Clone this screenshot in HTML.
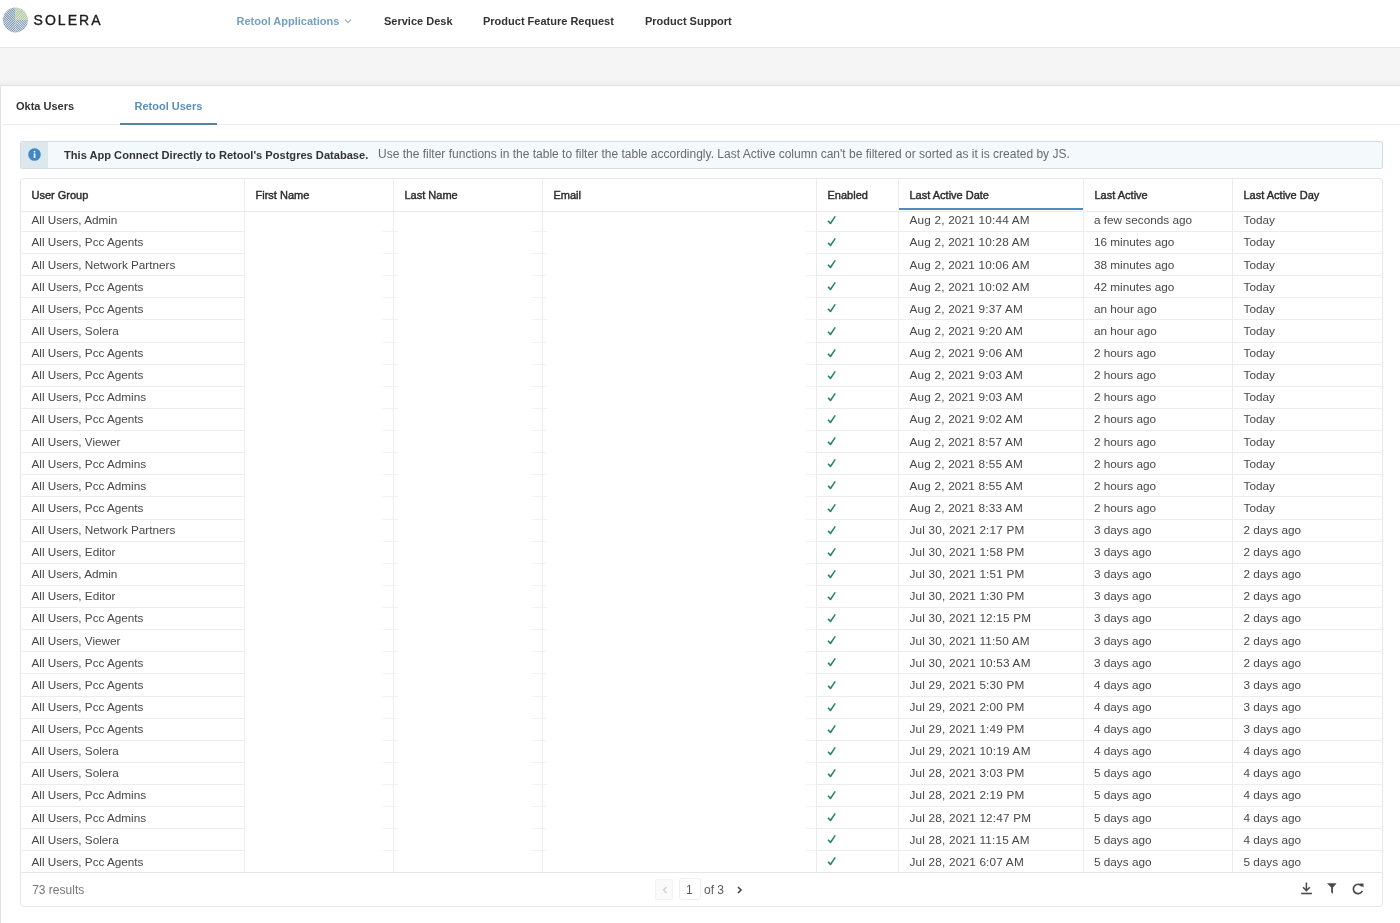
<!DOCTYPE html>
<html><head><meta charset="utf-8">
<style>
html,body{margin:0;padding:0;}
body{will-change:transform;width:1400px;height:923px;overflow:hidden;position:relative;background:#fff;font-family:"Liberation Sans",sans-serif;}
.a{position:absolute;}
.t{position:absolute;white-space:nowrap;}
</style></head><body>

<div class="a" style="left:0;top:0;width:1400px;height:47px;background:#fff;"></div>
<div class="a" style="left:0;top:47px;width:1400px;height:1px;background:#e7e7e7;"></div>
<div class="a" style="left:0;top:48px;width:1400px;height:37px;background:#f5f5f5;"></div>
<div class="a" style="left:0;top:80px;width:1400px;height:5px;background:linear-gradient(#f5f5f5,#eeeeee);"></div>
<svg class="a" style="left:2px;top:7px" width="27" height="27" viewBox="0 0 27 27">
<defs><clipPath id="cc"><circle cx="13.45" cy="13.0" r="12.5"/></clipPath>
<clipPath id="q1"><rect x="0" y="0" width="13.45" height="13"/></clipPath>
<clipPath id="q2"><rect x="0" y="13" width="13.45" height="14"/></clipPath>
<clipPath id="q3"><rect x="13.45" y="0" width="14" height="13"/></clipPath>
<clipPath id="q4"><rect x="13.45" y="13" width="14" height="14"/></clipPath>
</defs>
<g clip-path="url(#cc)" stroke-width="1.05" fill="none">
<g clip-path="url(#q1)" stroke="#7590aa"><path d="M-5 -42.55 L32 -5.55"/><path d="M-5 -40.20 L32 -3.20"/><path d="M-5 -37.85 L32 -0.85"/><path d="M-5 -35.50 L32 1.50"/><path d="M-5 -33.15 L32 3.85"/><path d="M-5 -30.80 L32 6.20"/><path d="M-5 -28.45 L32 8.55"/><path d="M-5 -26.10 L32 10.90"/><path d="M-5 -23.75 L32 13.25"/><path d="M-5 -21.40 L32 15.60"/><path d="M-5 -19.05 L32 17.95"/><path d="M-5 -16.70 L32 20.30"/><path d="M-5 -14.35 L32 22.65"/><path d="M-5 -12.00 L32 25.00"/><path d="M-5 -9.65 L32 27.35"/><path d="M-5 -7.30 L32 29.70"/><path d="M-5 -4.95 L32 32.05"/><path d="M-5 -2.60 L32 34.40"/><path d="M-5 -0.25 L32 36.75"/><path d="M-5 2.10 L32 39.10"/><path d="M-5 4.45 L32 41.45"/><path d="M-5 6.80 L32 43.80"/><path d="M-5 9.15 L32 46.15"/><path d="M-5 11.50 L32 48.50"/><path d="M-5 13.85 L32 50.85"/><path d="M-5 16.20 L32 53.20"/><path d="M-5 18.55 L32 55.55"/><path d="M-5 20.90 L32 57.90"/><path d="M-5 23.25 L32 60.25"/><path d="M-5 25.60 L32 62.60"/><path d="M-5 27.95 L32 64.95"/><path d="M-5 30.30 L32 67.30"/><path d="M-5 32.65 L32 69.65"/></g><g clip-path="url(#q2)" stroke="#7a95ae"><path d="M-5 -5.65 L32 -42.65"/><path d="M-5 -3.30 L32 -40.30"/><path d="M-5 -0.95 L32 -37.95"/><path d="M-5 1.40 L32 -35.60"/><path d="M-5 3.75 L32 -33.25"/><path d="M-5 6.10 L32 -30.90"/><path d="M-5 8.45 L32 -28.55"/><path d="M-5 10.80 L32 -26.20"/><path d="M-5 13.15 L32 -23.85"/><path d="M-5 15.50 L32 -21.50"/><path d="M-5 17.85 L32 -19.15"/><path d="M-5 20.20 L32 -16.80"/><path d="M-5 22.55 L32 -14.45"/><path d="M-5 24.90 L32 -12.10"/><path d="M-5 27.25 L32 -9.75"/><path d="M-5 29.60 L32 -7.40"/><path d="M-5 31.95 L32 -5.05"/><path d="M-5 34.30 L32 -2.70"/><path d="M-5 36.65 L32 -0.35"/><path d="M-5 39.00 L32 2.00"/><path d="M-5 41.35 L32 4.35"/><path d="M-5 43.70 L32 6.70"/><path d="M-5 46.05 L32 9.05"/><path d="M-5 48.40 L32 11.40"/><path d="M-5 50.75 L32 13.75"/><path d="M-5 53.10 L32 16.10"/><path d="M-5 55.45 L32 18.45"/><path d="M-5 57.80 L32 20.80"/><path d="M-5 60.15 L32 23.15"/><path d="M-5 62.50 L32 25.50"/><path d="M-5 64.85 L32 27.85"/><path d="M-5 67.20 L32 30.20"/><path d="M-5 69.55 L32 32.55"/></g><g clip-path="url(#q3)" stroke="#a3bf94"><path d="M-5 -5.65 L32 -42.65"/><path d="M-5 -3.30 L32 -40.30"/><path d="M-5 -0.95 L32 -37.95"/><path d="M-5 1.40 L32 -35.60"/><path d="M-5 3.75 L32 -33.25"/><path d="M-5 6.10 L32 -30.90"/><path d="M-5 8.45 L32 -28.55"/><path d="M-5 10.80 L32 -26.20"/><path d="M-5 13.15 L32 -23.85"/><path d="M-5 15.50 L32 -21.50"/><path d="M-5 17.85 L32 -19.15"/><path d="M-5 20.20 L32 -16.80"/><path d="M-5 22.55 L32 -14.45"/><path d="M-5 24.90 L32 -12.10"/><path d="M-5 27.25 L32 -9.75"/><path d="M-5 29.60 L32 -7.40"/><path d="M-5 31.95 L32 -5.05"/><path d="M-5 34.30 L32 -2.70"/><path d="M-5 36.65 L32 -0.35"/><path d="M-5 39.00 L32 2.00"/><path d="M-5 41.35 L32 4.35"/><path d="M-5 43.70 L32 6.70"/><path d="M-5 46.05 L32 9.05"/><path d="M-5 48.40 L32 11.40"/><path d="M-5 50.75 L32 13.75"/><path d="M-5 53.10 L32 16.10"/><path d="M-5 55.45 L32 18.45"/><path d="M-5 57.80 L32 20.80"/><path d="M-5 60.15 L32 23.15"/><path d="M-5 62.50 L32 25.50"/><path d="M-5 64.85 L32 27.85"/><path d="M-5 67.20 L32 30.20"/><path d="M-5 69.55 L32 32.55"/></g><g clip-path="url(#q4)" stroke="#7f99b2"><path d="M-5 -42.55 L32 -5.55"/><path d="M-5 -40.20 L32 -3.20"/><path d="M-5 -37.85 L32 -0.85"/><path d="M-5 -35.50 L32 1.50"/><path d="M-5 -33.15 L32 3.85"/><path d="M-5 -30.80 L32 6.20"/><path d="M-5 -28.45 L32 8.55"/><path d="M-5 -26.10 L32 10.90"/><path d="M-5 -23.75 L32 13.25"/><path d="M-5 -21.40 L32 15.60"/><path d="M-5 -19.05 L32 17.95"/><path d="M-5 -16.70 L32 20.30"/><path d="M-5 -14.35 L32 22.65"/><path d="M-5 -12.00 L32 25.00"/><path d="M-5 -9.65 L32 27.35"/><path d="M-5 -7.30 L32 29.70"/><path d="M-5 -4.95 L32 32.05"/><path d="M-5 -2.60 L32 34.40"/><path d="M-5 -0.25 L32 36.75"/><path d="M-5 2.10 L32 39.10"/><path d="M-5 4.45 L32 41.45"/><path d="M-5 6.80 L32 43.80"/><path d="M-5 9.15 L32 46.15"/><path d="M-5 11.50 L32 48.50"/><path d="M-5 13.85 L32 50.85"/><path d="M-5 16.20 L32 53.20"/><path d="M-5 18.55 L32 55.55"/><path d="M-5 20.90 L32 57.90"/><path d="M-5 23.25 L32 60.25"/><path d="M-5 25.60 L32 62.60"/><path d="M-5 27.95 L32 64.95"/><path d="M-5 30.30 L32 67.30"/><path d="M-5 32.65 L32 69.65"/></g></g></svg>
<div class="t" style="left:33.5px;top:12px;font-size:14px;line-height:16px;letter-spacing:2.05px;color:#1e1e1e;-webkit-text-stroke:0.35px #1e1e1e;">SOLERA</div>
<div class="t" style="left:236.5px;top:13.99px;font-size:11px;line-height:15px;color:#76a0bf;font-weight:bold;">Retool Applications</div>
<svg class="a" style="left:344px;top:18px" width="8" height="6" viewBox="0 0 8 6"><path d="M1 1.5 L4 4.5 L7 1.5" fill="none" stroke="#a6b8c6" stroke-width="1.3"/></svg>
<div class="t" style="left:384px;top:13.99px;font-size:11px;line-height:15px;color:#333;font-weight:bold;">Service Desk</div>
<div class="t" style="left:483px;top:13.99px;font-size:11px;line-height:15px;color:#333;font-weight:bold;">Product Feature Request</div>
<div class="t" style="left:645px;top:13.99px;font-size:11px;line-height:15px;color:#333;font-weight:bold;">Product Support</div>
<div class="a" style="left:0;top:85px;width:1400px;height:838px;background:#fff;border-top:1px solid #e2e2e2;border-left:1px solid #e2e2e2;box-sizing:border-box;"></div>
<div class="t" style="left:16px;top:99.39px;font-size:11px;line-height:15px;color:#333;font-weight:bold;">Okta Users</div>
<div class="t" style="left:134.5px;top:99.39px;font-size:11px;line-height:15px;color:#5b8fb8;font-weight:bold;">Retool Users</div>
<div class="a" style="left:2px;top:124px;width:1398px;height:1px;background:#ececec;"></div>
<div class="a" style="left:120px;top:123px;width:96.5px;height:2px;background:#55849f;"></div>
<div class="a" style="left:20px;top:141px;width:1363px;height:28px;background:#f4f9fb;border:1px solid #d3dee4;box-sizing:border-box;border-radius:2px;"></div>
<div class="a" style="left:21px;top:142px;width:27px;height:26px;background:#dde7ee;border-radius:2px 0 0 2px;"></div>
<svg class="a" style="left:28px;top:147.8px" width="13" height="13" viewBox="0 0 13 13"><circle cx="6.5" cy="6.5" r="6.3" fill="#3f87c5"/><rect x="5.7" y="5.4" width="1.7" height="4.6" fill="#fff"/><circle cx="6.55" cy="3.6" r="0.95" fill="#fff"/></svg>
<div class="t" style="left:64px;top:147.05px;font-size:11.1px;line-height:16px;color:#333;font-weight:bold;">This App Connect Directly to Retool's Postgres Database.</div>
<div class="t" style="left:378px;top:146.24px;font-size:12px;line-height:17px;color:#6b6b6b;font-weight:normal;">Use the filter functions in the table to filter the table accordingly. Last Active column can't be filtered or sorted as it is created by JS.</div>
<div class="a" style="left:20px;top:178px;width:1363px;height:729px;border:1px solid #e6e6e6;border-radius:4px;box-sizing:border-box;background:#fff;"></div>
<div class="a" style="left:21px;top:211px;width:1361px;height:1px;background:#eaeaea;"></div>
<div class="a" style="left:244px;top:179px;width:1px;height:693px;background:#ececec;"></div>
<div class="a" style="left:393px;top:179px;width:1px;height:693px;background:#ececec;"></div>
<div class="a" style="left:542px;top:179px;width:1px;height:693px;background:#ececec;"></div>
<div class="a" style="left:816px;top:179px;width:1px;height:693px;background:#ececec;"></div>
<div class="a" style="left:898px;top:179px;width:1px;height:693px;background:#ececec;"></div>
<div class="a" style="left:1083px;top:179px;width:1px;height:693px;background:#ececec;"></div>
<div class="a" style="left:1232px;top:179px;width:1px;height:693px;background:#ececec;"></div>
<div class="a" style="left:899px;top:208px;width:184px;height:2px;background:#4f8bbf;"></div>
<div class="t" style="left:31.5px;top:188.09px;font-size:11px;line-height:15px;color:#2b2b2b;font-weight:normal;-webkit-text-stroke:0.4px #2b2b2b;">User Group</div>
<div class="t" style="left:255.5px;top:188.09px;font-size:11px;line-height:15px;color:#2b2b2b;font-weight:normal;-webkit-text-stroke:0.4px #2b2b2b;">First Name</div>
<div class="t" style="left:404.5px;top:188.09px;font-size:11px;line-height:15px;color:#2b2b2b;font-weight:normal;-webkit-text-stroke:0.4px #2b2b2b;">Last Name</div>
<div class="t" style="left:553.5px;top:188.09px;font-size:11px;line-height:15px;color:#2b2b2b;font-weight:normal;-webkit-text-stroke:0.4px #2b2b2b;">Email</div>
<div class="t" style="left:827.5px;top:188.09px;font-size:11px;line-height:15px;color:#2b2b2b;font-weight:normal;-webkit-text-stroke:0.4px #2b2b2b;">Enabled</div>
<div class="t" style="left:909.5px;top:188.09px;font-size:11px;line-height:15px;color:#2b2b2b;font-weight:normal;-webkit-text-stroke:0.4px #2b2b2b;">Last Active Date</div>
<div class="t" style="left:1094.5px;top:188.09px;font-size:11px;line-height:15px;color:#2b2b2b;font-weight:normal;-webkit-text-stroke:0.4px #2b2b2b;">Last Active</div>
<div class="t" style="left:1243.5px;top:188.09px;font-size:11px;line-height:15px;color:#2b2b2b;font-weight:normal;-webkit-text-stroke:0.4px #2b2b2b;">Last Active Day</div>
<div class="a" style="left:21px;top:231.00px;width:223px;height:1px;background:#ededed;"></div>
<div class="a" style="left:817px;top:231.00px;width:81px;height:1px;background:#ededed;"></div>
<div class="a" style="left:899px;top:231.00px;width:184px;height:1px;background:#ededed;"></div>
<div class="a" style="left:1084px;top:231.00px;width:148px;height:1px;background:#ededed;"></div>
<div class="a" style="left:1233px;top:231.00px;width:150px;height:1px;background:#ededed;"></div>
<div class="a" style="left:383px;top:231.00px;width:15px;height:1px;background:#f1f1f1;"></div>
<div class="a" style="left:532px;top:231.00px;width:15px;height:1px;background:#f1f1f1;"></div>
<div class="a" style="left:806px;top:231.00px;width:10px;height:1px;background:#f3f3f3;"></div>
<div class="t" style="left:31.5px;top:212.33px;font-size:11.75px;line-height:16px;color:#474747;font-weight:normal;letter-spacing:-0.02px;">All Users, Admin</div>
<div class="a" style="left:826.5px;top:216.00px;width:10px;height:10px;"><svg style="display:block" width="10" height="10" viewBox="0 0 10 10"><path d="M0.45 5.25 L1.55 4.25 L3.45 6.05 L7.7 -0.1 L8.85 0.65 L4.15 8.1 L3.05 8.2 Z" fill="#2a8664"/></svg></div>
<div class="t" style="left:909.5px;top:212.33px;font-size:11.75px;line-height:16px;color:#474747;font-weight:normal;letter-spacing:0.2px;">Aug 2, 2021 10:44 AM</div>
<div class="t" style="left:1094px;top:212.33px;font-size:11.75px;line-height:16px;color:#474747;font-weight:normal;">a few seconds ago</div>
<div class="t" style="left:1243.5px;top:212.33px;font-size:11.75px;line-height:16px;color:#474747;font-weight:normal;">Today</div>
<div class="a" style="left:21px;top:253.12px;width:223px;height:1px;background:#ededed;"></div>
<div class="a" style="left:817px;top:253.12px;width:81px;height:1px;background:#ededed;"></div>
<div class="a" style="left:899px;top:253.12px;width:184px;height:1px;background:#ededed;"></div>
<div class="a" style="left:1084px;top:253.12px;width:148px;height:1px;background:#ededed;"></div>
<div class="a" style="left:1233px;top:253.12px;width:150px;height:1px;background:#ededed;"></div>
<div class="a" style="left:383px;top:253.12px;width:15px;height:1px;background:#f1f1f1;"></div>
<div class="a" style="left:532px;top:253.12px;width:15px;height:1px;background:#f1f1f1;"></div>
<div class="a" style="left:806px;top:253.12px;width:10px;height:1px;background:#f3f3f3;"></div>
<div class="t" style="left:31.5px;top:234.45px;font-size:11.75px;line-height:16px;color:#474747;font-weight:normal;letter-spacing:-0.02px;">All Users, Pcc Agents</div>
<div class="a" style="left:826.5px;top:238.12px;width:10px;height:10px;"><svg style="display:block" width="10" height="10" viewBox="0 0 10 10"><path d="M0.45 5.25 L1.55 4.25 L3.45 6.05 L7.7 -0.1 L8.85 0.65 L4.15 8.1 L3.05 8.2 Z" fill="#2a8664"/></svg></div>
<div class="t" style="left:909.5px;top:234.45px;font-size:11.75px;line-height:16px;color:#474747;font-weight:normal;letter-spacing:0.2px;">Aug 2, 2021 10:28 AM</div>
<div class="t" style="left:1094px;top:234.45px;font-size:11.75px;line-height:16px;color:#474747;font-weight:normal;">16 minutes ago</div>
<div class="t" style="left:1243.5px;top:234.45px;font-size:11.75px;line-height:16px;color:#474747;font-weight:normal;">Today</div>
<div class="a" style="left:21px;top:275.24px;width:223px;height:1px;background:#ededed;"></div>
<div class="a" style="left:817px;top:275.24px;width:81px;height:1px;background:#ededed;"></div>
<div class="a" style="left:899px;top:275.24px;width:184px;height:1px;background:#ededed;"></div>
<div class="a" style="left:1084px;top:275.24px;width:148px;height:1px;background:#ededed;"></div>
<div class="a" style="left:1233px;top:275.24px;width:150px;height:1px;background:#ededed;"></div>
<div class="a" style="left:383px;top:275.24px;width:15px;height:1px;background:#f1f1f1;"></div>
<div class="a" style="left:532px;top:275.24px;width:15px;height:1px;background:#f1f1f1;"></div>
<div class="a" style="left:806px;top:275.24px;width:10px;height:1px;background:#f3f3f3;"></div>
<div class="t" style="left:31.5px;top:256.57px;font-size:11.75px;line-height:16px;color:#474747;font-weight:normal;letter-spacing:-0.02px;">All Users, Network Partners</div>
<div class="a" style="left:826.5px;top:260.24px;width:10px;height:10px;"><svg style="display:block" width="10" height="10" viewBox="0 0 10 10"><path d="M0.45 5.25 L1.55 4.25 L3.45 6.05 L7.7 -0.1 L8.85 0.65 L4.15 8.1 L3.05 8.2 Z" fill="#2a8664"/></svg></div>
<div class="t" style="left:909.5px;top:256.57px;font-size:11.75px;line-height:16px;color:#474747;font-weight:normal;letter-spacing:0.2px;">Aug 2, 2021 10:06 AM</div>
<div class="t" style="left:1094px;top:256.57px;font-size:11.75px;line-height:16px;color:#474747;font-weight:normal;">38 minutes ago</div>
<div class="t" style="left:1243.5px;top:256.57px;font-size:11.75px;line-height:16px;color:#474747;font-weight:normal;">Today</div>
<div class="a" style="left:21px;top:297.36px;width:223px;height:1px;background:#ededed;"></div>
<div class="a" style="left:817px;top:297.36px;width:81px;height:1px;background:#ededed;"></div>
<div class="a" style="left:899px;top:297.36px;width:184px;height:1px;background:#ededed;"></div>
<div class="a" style="left:1084px;top:297.36px;width:148px;height:1px;background:#ededed;"></div>
<div class="a" style="left:1233px;top:297.36px;width:150px;height:1px;background:#ededed;"></div>
<div class="a" style="left:383px;top:297.36px;width:15px;height:1px;background:#f1f1f1;"></div>
<div class="a" style="left:532px;top:297.36px;width:15px;height:1px;background:#f1f1f1;"></div>
<div class="a" style="left:806px;top:297.36px;width:10px;height:1px;background:#f3f3f3;"></div>
<div class="t" style="left:31.5px;top:278.69px;font-size:11.75px;line-height:16px;color:#474747;font-weight:normal;letter-spacing:-0.02px;">All Users, Pcc Agents</div>
<div class="a" style="left:826.5px;top:282.36px;width:10px;height:10px;"><svg style="display:block" width="10" height="10" viewBox="0 0 10 10"><path d="M0.45 5.25 L1.55 4.25 L3.45 6.05 L7.7 -0.1 L8.85 0.65 L4.15 8.1 L3.05 8.2 Z" fill="#2a8664"/></svg></div>
<div class="t" style="left:909.5px;top:278.69px;font-size:11.75px;line-height:16px;color:#474747;font-weight:normal;letter-spacing:0.2px;">Aug 2, 2021 10:02 AM</div>
<div class="t" style="left:1094px;top:278.69px;font-size:11.75px;line-height:16px;color:#474747;font-weight:normal;">42 minutes ago</div>
<div class="t" style="left:1243.5px;top:278.69px;font-size:11.75px;line-height:16px;color:#474747;font-weight:normal;">Today</div>
<div class="a" style="left:21px;top:319.48px;width:223px;height:1px;background:#ededed;"></div>
<div class="a" style="left:817px;top:319.48px;width:81px;height:1px;background:#ededed;"></div>
<div class="a" style="left:899px;top:319.48px;width:184px;height:1px;background:#ededed;"></div>
<div class="a" style="left:1084px;top:319.48px;width:148px;height:1px;background:#ededed;"></div>
<div class="a" style="left:1233px;top:319.48px;width:150px;height:1px;background:#ededed;"></div>
<div class="a" style="left:383px;top:319.48px;width:15px;height:1px;background:#f1f1f1;"></div>
<div class="a" style="left:532px;top:319.48px;width:15px;height:1px;background:#f1f1f1;"></div>
<div class="a" style="left:806px;top:319.48px;width:10px;height:1px;background:#f3f3f3;"></div>
<div class="t" style="left:31.5px;top:300.81px;font-size:11.75px;line-height:16px;color:#474747;font-weight:normal;letter-spacing:-0.02px;">All Users, Pcc Agents</div>
<div class="a" style="left:826.5px;top:304.48px;width:10px;height:10px;"><svg style="display:block" width="10" height="10" viewBox="0 0 10 10"><path d="M0.45 5.25 L1.55 4.25 L3.45 6.05 L7.7 -0.1 L8.85 0.65 L4.15 8.1 L3.05 8.2 Z" fill="#2a8664"/></svg></div>
<div class="t" style="left:909.5px;top:300.81px;font-size:11.75px;line-height:16px;color:#474747;font-weight:normal;letter-spacing:0.2px;">Aug 2, 2021 9:37 AM</div>
<div class="t" style="left:1094px;top:300.81px;font-size:11.75px;line-height:16px;color:#474747;font-weight:normal;">an hour ago</div>
<div class="t" style="left:1243.5px;top:300.81px;font-size:11.75px;line-height:16px;color:#474747;font-weight:normal;">Today</div>
<div class="a" style="left:21px;top:341.60px;width:223px;height:1px;background:#ededed;"></div>
<div class="a" style="left:817px;top:341.60px;width:81px;height:1px;background:#ededed;"></div>
<div class="a" style="left:899px;top:341.60px;width:184px;height:1px;background:#ededed;"></div>
<div class="a" style="left:1084px;top:341.60px;width:148px;height:1px;background:#ededed;"></div>
<div class="a" style="left:1233px;top:341.60px;width:150px;height:1px;background:#ededed;"></div>
<div class="a" style="left:383px;top:341.60px;width:15px;height:1px;background:#f1f1f1;"></div>
<div class="a" style="left:532px;top:341.60px;width:15px;height:1px;background:#f1f1f1;"></div>
<div class="a" style="left:806px;top:341.60px;width:10px;height:1px;background:#f3f3f3;"></div>
<div class="t" style="left:31.5px;top:322.93px;font-size:11.75px;line-height:16px;color:#474747;font-weight:normal;letter-spacing:-0.02px;">All Users, Solera</div>
<div class="a" style="left:826.5px;top:326.60px;width:10px;height:10px;"><svg style="display:block" width="10" height="10" viewBox="0 0 10 10"><path d="M0.45 5.25 L1.55 4.25 L3.45 6.05 L7.7 -0.1 L8.85 0.65 L4.15 8.1 L3.05 8.2 Z" fill="#2a8664"/></svg></div>
<div class="t" style="left:909.5px;top:322.93px;font-size:11.75px;line-height:16px;color:#474747;font-weight:normal;letter-spacing:0.2px;">Aug 2, 2021 9:20 AM</div>
<div class="t" style="left:1094px;top:322.93px;font-size:11.75px;line-height:16px;color:#474747;font-weight:normal;">an hour ago</div>
<div class="t" style="left:1243.5px;top:322.93px;font-size:11.75px;line-height:16px;color:#474747;font-weight:normal;">Today</div>
<div class="a" style="left:21px;top:363.72px;width:223px;height:1px;background:#ededed;"></div>
<div class="a" style="left:817px;top:363.72px;width:81px;height:1px;background:#ededed;"></div>
<div class="a" style="left:899px;top:363.72px;width:184px;height:1px;background:#ededed;"></div>
<div class="a" style="left:1084px;top:363.72px;width:148px;height:1px;background:#ededed;"></div>
<div class="a" style="left:1233px;top:363.72px;width:150px;height:1px;background:#ededed;"></div>
<div class="a" style="left:383px;top:363.72px;width:15px;height:1px;background:#f1f1f1;"></div>
<div class="a" style="left:532px;top:363.72px;width:15px;height:1px;background:#f1f1f1;"></div>
<div class="a" style="left:806px;top:363.72px;width:10px;height:1px;background:#f3f3f3;"></div>
<div class="t" style="left:31.5px;top:345.05px;font-size:11.75px;line-height:16px;color:#474747;font-weight:normal;letter-spacing:-0.02px;">All Users, Pcc Agents</div>
<div class="a" style="left:826.5px;top:348.72px;width:10px;height:10px;"><svg style="display:block" width="10" height="10" viewBox="0 0 10 10"><path d="M0.45 5.25 L1.55 4.25 L3.45 6.05 L7.7 -0.1 L8.85 0.65 L4.15 8.1 L3.05 8.2 Z" fill="#2a8664"/></svg></div>
<div class="t" style="left:909.5px;top:345.05px;font-size:11.75px;line-height:16px;color:#474747;font-weight:normal;letter-spacing:0.2px;">Aug 2, 2021 9:06 AM</div>
<div class="t" style="left:1094px;top:345.05px;font-size:11.75px;line-height:16px;color:#474747;font-weight:normal;">2 hours ago</div>
<div class="t" style="left:1243.5px;top:345.05px;font-size:11.75px;line-height:16px;color:#474747;font-weight:normal;">Today</div>
<div class="a" style="left:21px;top:385.84px;width:223px;height:1px;background:#ededed;"></div>
<div class="a" style="left:817px;top:385.84px;width:81px;height:1px;background:#ededed;"></div>
<div class="a" style="left:899px;top:385.84px;width:184px;height:1px;background:#ededed;"></div>
<div class="a" style="left:1084px;top:385.84px;width:148px;height:1px;background:#ededed;"></div>
<div class="a" style="left:1233px;top:385.84px;width:150px;height:1px;background:#ededed;"></div>
<div class="a" style="left:383px;top:385.84px;width:15px;height:1px;background:#f1f1f1;"></div>
<div class="a" style="left:532px;top:385.84px;width:15px;height:1px;background:#f1f1f1;"></div>
<div class="a" style="left:806px;top:385.84px;width:10px;height:1px;background:#f3f3f3;"></div>
<div class="t" style="left:31.5px;top:367.17px;font-size:11.75px;line-height:16px;color:#474747;font-weight:normal;letter-spacing:-0.02px;">All Users, Pcc Agents</div>
<div class="a" style="left:826.5px;top:370.84px;width:10px;height:10px;"><svg style="display:block" width="10" height="10" viewBox="0 0 10 10"><path d="M0.45 5.25 L1.55 4.25 L3.45 6.05 L7.7 -0.1 L8.85 0.65 L4.15 8.1 L3.05 8.2 Z" fill="#2a8664"/></svg></div>
<div class="t" style="left:909.5px;top:367.17px;font-size:11.75px;line-height:16px;color:#474747;font-weight:normal;letter-spacing:0.2px;">Aug 2, 2021 9:03 AM</div>
<div class="t" style="left:1094px;top:367.17px;font-size:11.75px;line-height:16px;color:#474747;font-weight:normal;">2 hours ago</div>
<div class="t" style="left:1243.5px;top:367.17px;font-size:11.75px;line-height:16px;color:#474747;font-weight:normal;">Today</div>
<div class="a" style="left:21px;top:407.96px;width:223px;height:1px;background:#ededed;"></div>
<div class="a" style="left:817px;top:407.96px;width:81px;height:1px;background:#ededed;"></div>
<div class="a" style="left:899px;top:407.96px;width:184px;height:1px;background:#ededed;"></div>
<div class="a" style="left:1084px;top:407.96px;width:148px;height:1px;background:#ededed;"></div>
<div class="a" style="left:1233px;top:407.96px;width:150px;height:1px;background:#ededed;"></div>
<div class="a" style="left:383px;top:407.96px;width:15px;height:1px;background:#f1f1f1;"></div>
<div class="a" style="left:532px;top:407.96px;width:15px;height:1px;background:#f1f1f1;"></div>
<div class="a" style="left:806px;top:407.96px;width:10px;height:1px;background:#f3f3f3;"></div>
<div class="t" style="left:31.5px;top:389.29px;font-size:11.75px;line-height:16px;color:#474747;font-weight:normal;letter-spacing:-0.02px;">All Users, Pcc Admins</div>
<div class="a" style="left:826.5px;top:392.96px;width:10px;height:10px;"><svg style="display:block" width="10" height="10" viewBox="0 0 10 10"><path d="M0.45 5.25 L1.55 4.25 L3.45 6.05 L7.7 -0.1 L8.85 0.65 L4.15 8.1 L3.05 8.2 Z" fill="#2a8664"/></svg></div>
<div class="t" style="left:909.5px;top:389.29px;font-size:11.75px;line-height:16px;color:#474747;font-weight:normal;letter-spacing:0.2px;">Aug 2, 2021 9:03 AM</div>
<div class="t" style="left:1094px;top:389.29px;font-size:11.75px;line-height:16px;color:#474747;font-weight:normal;">2 hours ago</div>
<div class="t" style="left:1243.5px;top:389.29px;font-size:11.75px;line-height:16px;color:#474747;font-weight:normal;">Today</div>
<div class="a" style="left:21px;top:430.08px;width:223px;height:1px;background:#ededed;"></div>
<div class="a" style="left:817px;top:430.08px;width:81px;height:1px;background:#ededed;"></div>
<div class="a" style="left:899px;top:430.08px;width:184px;height:1px;background:#ededed;"></div>
<div class="a" style="left:1084px;top:430.08px;width:148px;height:1px;background:#ededed;"></div>
<div class="a" style="left:1233px;top:430.08px;width:150px;height:1px;background:#ededed;"></div>
<div class="a" style="left:383px;top:430.08px;width:15px;height:1px;background:#f1f1f1;"></div>
<div class="a" style="left:532px;top:430.08px;width:15px;height:1px;background:#f1f1f1;"></div>
<div class="a" style="left:806px;top:430.08px;width:10px;height:1px;background:#f3f3f3;"></div>
<div class="t" style="left:31.5px;top:411.41px;font-size:11.75px;line-height:16px;color:#474747;font-weight:normal;letter-spacing:-0.02px;">All Users, Pcc Agents</div>
<div class="a" style="left:826.5px;top:415.08px;width:10px;height:10px;"><svg style="display:block" width="10" height="10" viewBox="0 0 10 10"><path d="M0.45 5.25 L1.55 4.25 L3.45 6.05 L7.7 -0.1 L8.85 0.65 L4.15 8.1 L3.05 8.2 Z" fill="#2a8664"/></svg></div>
<div class="t" style="left:909.5px;top:411.41px;font-size:11.75px;line-height:16px;color:#474747;font-weight:normal;letter-spacing:0.2px;">Aug 2, 2021 9:02 AM</div>
<div class="t" style="left:1094px;top:411.41px;font-size:11.75px;line-height:16px;color:#474747;font-weight:normal;">2 hours ago</div>
<div class="t" style="left:1243.5px;top:411.41px;font-size:11.75px;line-height:16px;color:#474747;font-weight:normal;">Today</div>
<div class="a" style="left:21px;top:452.20px;width:223px;height:1px;background:#ededed;"></div>
<div class="a" style="left:817px;top:452.20px;width:81px;height:1px;background:#ededed;"></div>
<div class="a" style="left:899px;top:452.20px;width:184px;height:1px;background:#ededed;"></div>
<div class="a" style="left:1084px;top:452.20px;width:148px;height:1px;background:#ededed;"></div>
<div class="a" style="left:1233px;top:452.20px;width:150px;height:1px;background:#ededed;"></div>
<div class="a" style="left:383px;top:452.20px;width:15px;height:1px;background:#f1f1f1;"></div>
<div class="a" style="left:532px;top:452.20px;width:15px;height:1px;background:#f1f1f1;"></div>
<div class="a" style="left:806px;top:452.20px;width:10px;height:1px;background:#f3f3f3;"></div>
<div class="t" style="left:31.5px;top:433.53px;font-size:11.75px;line-height:16px;color:#474747;font-weight:normal;letter-spacing:-0.02px;">All Users, Viewer</div>
<div class="a" style="left:826.5px;top:437.20px;width:10px;height:10px;"><svg style="display:block" width="10" height="10" viewBox="0 0 10 10"><path d="M0.45 5.25 L1.55 4.25 L3.45 6.05 L7.7 -0.1 L8.85 0.65 L4.15 8.1 L3.05 8.2 Z" fill="#2a8664"/></svg></div>
<div class="t" style="left:909.5px;top:433.53px;font-size:11.75px;line-height:16px;color:#474747;font-weight:normal;letter-spacing:0.2px;">Aug 2, 2021 8:57 AM</div>
<div class="t" style="left:1094px;top:433.53px;font-size:11.75px;line-height:16px;color:#474747;font-weight:normal;">2 hours ago</div>
<div class="t" style="left:1243.5px;top:433.53px;font-size:11.75px;line-height:16px;color:#474747;font-weight:normal;">Today</div>
<div class="a" style="left:21px;top:474.32px;width:223px;height:1px;background:#ededed;"></div>
<div class="a" style="left:817px;top:474.32px;width:81px;height:1px;background:#ededed;"></div>
<div class="a" style="left:899px;top:474.32px;width:184px;height:1px;background:#ededed;"></div>
<div class="a" style="left:1084px;top:474.32px;width:148px;height:1px;background:#ededed;"></div>
<div class="a" style="left:1233px;top:474.32px;width:150px;height:1px;background:#ededed;"></div>
<div class="a" style="left:383px;top:474.32px;width:15px;height:1px;background:#f1f1f1;"></div>
<div class="a" style="left:532px;top:474.32px;width:15px;height:1px;background:#f1f1f1;"></div>
<div class="a" style="left:806px;top:474.32px;width:10px;height:1px;background:#f3f3f3;"></div>
<div class="t" style="left:31.5px;top:455.65px;font-size:11.75px;line-height:16px;color:#474747;font-weight:normal;letter-spacing:-0.02px;">All Users, Pcc Admins</div>
<div class="a" style="left:826.5px;top:459.32px;width:10px;height:10px;"><svg style="display:block" width="10" height="10" viewBox="0 0 10 10"><path d="M0.45 5.25 L1.55 4.25 L3.45 6.05 L7.7 -0.1 L8.85 0.65 L4.15 8.1 L3.05 8.2 Z" fill="#2a8664"/></svg></div>
<div class="t" style="left:909.5px;top:455.65px;font-size:11.75px;line-height:16px;color:#474747;font-weight:normal;letter-spacing:0.2px;">Aug 2, 2021 8:55 AM</div>
<div class="t" style="left:1094px;top:455.65px;font-size:11.75px;line-height:16px;color:#474747;font-weight:normal;">2 hours ago</div>
<div class="t" style="left:1243.5px;top:455.65px;font-size:11.75px;line-height:16px;color:#474747;font-weight:normal;">Today</div>
<div class="a" style="left:21px;top:496.44px;width:223px;height:1px;background:#ededed;"></div>
<div class="a" style="left:817px;top:496.44px;width:81px;height:1px;background:#ededed;"></div>
<div class="a" style="left:899px;top:496.44px;width:184px;height:1px;background:#ededed;"></div>
<div class="a" style="left:1084px;top:496.44px;width:148px;height:1px;background:#ededed;"></div>
<div class="a" style="left:1233px;top:496.44px;width:150px;height:1px;background:#ededed;"></div>
<div class="a" style="left:383px;top:496.44px;width:15px;height:1px;background:#f1f1f1;"></div>
<div class="a" style="left:532px;top:496.44px;width:15px;height:1px;background:#f1f1f1;"></div>
<div class="a" style="left:806px;top:496.44px;width:10px;height:1px;background:#f3f3f3;"></div>
<div class="t" style="left:31.5px;top:477.77px;font-size:11.75px;line-height:16px;color:#474747;font-weight:normal;letter-spacing:-0.02px;">All Users, Pcc Admins</div>
<div class="a" style="left:826.5px;top:481.44px;width:10px;height:10px;"><svg style="display:block" width="10" height="10" viewBox="0 0 10 10"><path d="M0.45 5.25 L1.55 4.25 L3.45 6.05 L7.7 -0.1 L8.85 0.65 L4.15 8.1 L3.05 8.2 Z" fill="#2a8664"/></svg></div>
<div class="t" style="left:909.5px;top:477.77px;font-size:11.75px;line-height:16px;color:#474747;font-weight:normal;letter-spacing:0.2px;">Aug 2, 2021 8:55 AM</div>
<div class="t" style="left:1094px;top:477.77px;font-size:11.75px;line-height:16px;color:#474747;font-weight:normal;">2 hours ago</div>
<div class="t" style="left:1243.5px;top:477.77px;font-size:11.75px;line-height:16px;color:#474747;font-weight:normal;">Today</div>
<div class="a" style="left:21px;top:518.56px;width:223px;height:1px;background:#ededed;"></div>
<div class="a" style="left:817px;top:518.56px;width:81px;height:1px;background:#ededed;"></div>
<div class="a" style="left:899px;top:518.56px;width:184px;height:1px;background:#ededed;"></div>
<div class="a" style="left:1084px;top:518.56px;width:148px;height:1px;background:#ededed;"></div>
<div class="a" style="left:1233px;top:518.56px;width:150px;height:1px;background:#ededed;"></div>
<div class="a" style="left:383px;top:518.56px;width:15px;height:1px;background:#f1f1f1;"></div>
<div class="a" style="left:532px;top:518.56px;width:15px;height:1px;background:#f1f1f1;"></div>
<div class="a" style="left:806px;top:518.56px;width:10px;height:1px;background:#f3f3f3;"></div>
<div class="t" style="left:31.5px;top:499.89px;font-size:11.75px;line-height:16px;color:#474747;font-weight:normal;letter-spacing:-0.02px;">All Users, Pcc Agents</div>
<div class="a" style="left:826.5px;top:503.56px;width:10px;height:10px;"><svg style="display:block" width="10" height="10" viewBox="0 0 10 10"><path d="M0.45 5.25 L1.55 4.25 L3.45 6.05 L7.7 -0.1 L8.85 0.65 L4.15 8.1 L3.05 8.2 Z" fill="#2a8664"/></svg></div>
<div class="t" style="left:909.5px;top:499.89px;font-size:11.75px;line-height:16px;color:#474747;font-weight:normal;letter-spacing:0.2px;">Aug 2, 2021 8:33 AM</div>
<div class="t" style="left:1094px;top:499.89px;font-size:11.75px;line-height:16px;color:#474747;font-weight:normal;">2 hours ago</div>
<div class="t" style="left:1243.5px;top:499.89px;font-size:11.75px;line-height:16px;color:#474747;font-weight:normal;">Today</div>
<div class="a" style="left:21px;top:540.68px;width:223px;height:1px;background:#ededed;"></div>
<div class="a" style="left:817px;top:540.68px;width:81px;height:1px;background:#ededed;"></div>
<div class="a" style="left:899px;top:540.68px;width:184px;height:1px;background:#ededed;"></div>
<div class="a" style="left:1084px;top:540.68px;width:148px;height:1px;background:#ededed;"></div>
<div class="a" style="left:1233px;top:540.68px;width:150px;height:1px;background:#ededed;"></div>
<div class="a" style="left:383px;top:540.68px;width:15px;height:1px;background:#f1f1f1;"></div>
<div class="a" style="left:532px;top:540.68px;width:15px;height:1px;background:#f1f1f1;"></div>
<div class="a" style="left:806px;top:540.68px;width:10px;height:1px;background:#f3f3f3;"></div>
<div class="t" style="left:31.5px;top:522.01px;font-size:11.75px;line-height:16px;color:#474747;font-weight:normal;letter-spacing:-0.02px;">All Users, Network Partners</div>
<div class="a" style="left:826.5px;top:525.68px;width:10px;height:10px;"><svg style="display:block" width="10" height="10" viewBox="0 0 10 10"><path d="M0.45 5.25 L1.55 4.25 L3.45 6.05 L7.7 -0.1 L8.85 0.65 L4.15 8.1 L3.05 8.2 Z" fill="#2a8664"/></svg></div>
<div class="t" style="left:909.5px;top:522.01px;font-size:11.75px;line-height:16px;color:#474747;font-weight:normal;letter-spacing:0.2px;">Jul 30, 2021 2:17 PM</div>
<div class="t" style="left:1094px;top:522.01px;font-size:11.75px;line-height:16px;color:#474747;font-weight:normal;">3 days ago</div>
<div class="t" style="left:1243.5px;top:522.01px;font-size:11.75px;line-height:16px;color:#474747;font-weight:normal;">2 days ago</div>
<div class="a" style="left:21px;top:562.80px;width:223px;height:1px;background:#ededed;"></div>
<div class="a" style="left:817px;top:562.80px;width:81px;height:1px;background:#ededed;"></div>
<div class="a" style="left:899px;top:562.80px;width:184px;height:1px;background:#ededed;"></div>
<div class="a" style="left:1084px;top:562.80px;width:148px;height:1px;background:#ededed;"></div>
<div class="a" style="left:1233px;top:562.80px;width:150px;height:1px;background:#ededed;"></div>
<div class="a" style="left:383px;top:562.80px;width:15px;height:1px;background:#f1f1f1;"></div>
<div class="a" style="left:532px;top:562.80px;width:15px;height:1px;background:#f1f1f1;"></div>
<div class="a" style="left:806px;top:562.80px;width:10px;height:1px;background:#f3f3f3;"></div>
<div class="t" style="left:31.5px;top:544.13px;font-size:11.75px;line-height:16px;color:#474747;font-weight:normal;letter-spacing:-0.02px;">All Users, Editor</div>
<div class="a" style="left:826.5px;top:547.80px;width:10px;height:10px;"><svg style="display:block" width="10" height="10" viewBox="0 0 10 10"><path d="M0.45 5.25 L1.55 4.25 L3.45 6.05 L7.7 -0.1 L8.85 0.65 L4.15 8.1 L3.05 8.2 Z" fill="#2a8664"/></svg></div>
<div class="t" style="left:909.5px;top:544.13px;font-size:11.75px;line-height:16px;color:#474747;font-weight:normal;letter-spacing:0.2px;">Jul 30, 2021 1:58 PM</div>
<div class="t" style="left:1094px;top:544.13px;font-size:11.75px;line-height:16px;color:#474747;font-weight:normal;">3 days ago</div>
<div class="t" style="left:1243.5px;top:544.13px;font-size:11.75px;line-height:16px;color:#474747;font-weight:normal;">2 days ago</div>
<div class="a" style="left:21px;top:584.92px;width:223px;height:1px;background:#ededed;"></div>
<div class="a" style="left:817px;top:584.92px;width:81px;height:1px;background:#ededed;"></div>
<div class="a" style="left:899px;top:584.92px;width:184px;height:1px;background:#ededed;"></div>
<div class="a" style="left:1084px;top:584.92px;width:148px;height:1px;background:#ededed;"></div>
<div class="a" style="left:1233px;top:584.92px;width:150px;height:1px;background:#ededed;"></div>
<div class="a" style="left:383px;top:584.92px;width:15px;height:1px;background:#f1f1f1;"></div>
<div class="a" style="left:532px;top:584.92px;width:15px;height:1px;background:#f1f1f1;"></div>
<div class="a" style="left:806px;top:584.92px;width:10px;height:1px;background:#f3f3f3;"></div>
<div class="t" style="left:31.5px;top:566.25px;font-size:11.75px;line-height:16px;color:#474747;font-weight:normal;letter-spacing:-0.02px;">All Users, Admin</div>
<div class="a" style="left:826.5px;top:569.92px;width:10px;height:10px;"><svg style="display:block" width="10" height="10" viewBox="0 0 10 10"><path d="M0.45 5.25 L1.55 4.25 L3.45 6.05 L7.7 -0.1 L8.85 0.65 L4.15 8.1 L3.05 8.2 Z" fill="#2a8664"/></svg></div>
<div class="t" style="left:909.5px;top:566.25px;font-size:11.75px;line-height:16px;color:#474747;font-weight:normal;letter-spacing:0.2px;">Jul 30, 2021 1:51 PM</div>
<div class="t" style="left:1094px;top:566.25px;font-size:11.75px;line-height:16px;color:#474747;font-weight:normal;">3 days ago</div>
<div class="t" style="left:1243.5px;top:566.25px;font-size:11.75px;line-height:16px;color:#474747;font-weight:normal;">2 days ago</div>
<div class="a" style="left:21px;top:607.04px;width:223px;height:1px;background:#ededed;"></div>
<div class="a" style="left:817px;top:607.04px;width:81px;height:1px;background:#ededed;"></div>
<div class="a" style="left:899px;top:607.04px;width:184px;height:1px;background:#ededed;"></div>
<div class="a" style="left:1084px;top:607.04px;width:148px;height:1px;background:#ededed;"></div>
<div class="a" style="left:1233px;top:607.04px;width:150px;height:1px;background:#ededed;"></div>
<div class="a" style="left:383px;top:607.04px;width:15px;height:1px;background:#f1f1f1;"></div>
<div class="a" style="left:532px;top:607.04px;width:15px;height:1px;background:#f1f1f1;"></div>
<div class="a" style="left:806px;top:607.04px;width:10px;height:1px;background:#f3f3f3;"></div>
<div class="t" style="left:31.5px;top:588.37px;font-size:11.75px;line-height:16px;color:#474747;font-weight:normal;letter-spacing:-0.02px;">All Users, Editor</div>
<div class="a" style="left:826.5px;top:592.04px;width:10px;height:10px;"><svg style="display:block" width="10" height="10" viewBox="0 0 10 10"><path d="M0.45 5.25 L1.55 4.25 L3.45 6.05 L7.7 -0.1 L8.85 0.65 L4.15 8.1 L3.05 8.2 Z" fill="#2a8664"/></svg></div>
<div class="t" style="left:909.5px;top:588.37px;font-size:11.75px;line-height:16px;color:#474747;font-weight:normal;letter-spacing:0.2px;">Jul 30, 2021 1:30 PM</div>
<div class="t" style="left:1094px;top:588.37px;font-size:11.75px;line-height:16px;color:#474747;font-weight:normal;">3 days ago</div>
<div class="t" style="left:1243.5px;top:588.37px;font-size:11.75px;line-height:16px;color:#474747;font-weight:normal;">2 days ago</div>
<div class="a" style="left:21px;top:629.16px;width:223px;height:1px;background:#ededed;"></div>
<div class="a" style="left:817px;top:629.16px;width:81px;height:1px;background:#ededed;"></div>
<div class="a" style="left:899px;top:629.16px;width:184px;height:1px;background:#ededed;"></div>
<div class="a" style="left:1084px;top:629.16px;width:148px;height:1px;background:#ededed;"></div>
<div class="a" style="left:1233px;top:629.16px;width:150px;height:1px;background:#ededed;"></div>
<div class="a" style="left:383px;top:629.16px;width:15px;height:1px;background:#f1f1f1;"></div>
<div class="a" style="left:532px;top:629.16px;width:15px;height:1px;background:#f1f1f1;"></div>
<div class="a" style="left:806px;top:629.16px;width:10px;height:1px;background:#f3f3f3;"></div>
<div class="t" style="left:31.5px;top:610.49px;font-size:11.75px;line-height:16px;color:#474747;font-weight:normal;letter-spacing:-0.02px;">All Users, Pcc Agents</div>
<div class="a" style="left:826.5px;top:614.16px;width:10px;height:10px;"><svg style="display:block" width="10" height="10" viewBox="0 0 10 10"><path d="M0.45 5.25 L1.55 4.25 L3.45 6.05 L7.7 -0.1 L8.85 0.65 L4.15 8.1 L3.05 8.2 Z" fill="#2a8664"/></svg></div>
<div class="t" style="left:909.5px;top:610.49px;font-size:11.75px;line-height:16px;color:#474747;font-weight:normal;letter-spacing:0.2px;">Jul 30, 2021 12:15 PM</div>
<div class="t" style="left:1094px;top:610.49px;font-size:11.75px;line-height:16px;color:#474747;font-weight:normal;">3 days ago</div>
<div class="t" style="left:1243.5px;top:610.49px;font-size:11.75px;line-height:16px;color:#474747;font-weight:normal;">2 days ago</div>
<div class="a" style="left:21px;top:651.28px;width:223px;height:1px;background:#ededed;"></div>
<div class="a" style="left:817px;top:651.28px;width:81px;height:1px;background:#ededed;"></div>
<div class="a" style="left:899px;top:651.28px;width:184px;height:1px;background:#ededed;"></div>
<div class="a" style="left:1084px;top:651.28px;width:148px;height:1px;background:#ededed;"></div>
<div class="a" style="left:1233px;top:651.28px;width:150px;height:1px;background:#ededed;"></div>
<div class="a" style="left:383px;top:651.28px;width:15px;height:1px;background:#f1f1f1;"></div>
<div class="a" style="left:532px;top:651.28px;width:15px;height:1px;background:#f1f1f1;"></div>
<div class="a" style="left:806px;top:651.28px;width:10px;height:1px;background:#f3f3f3;"></div>
<div class="t" style="left:31.5px;top:632.61px;font-size:11.75px;line-height:16px;color:#474747;font-weight:normal;letter-spacing:-0.02px;">All Users, Viewer</div>
<div class="a" style="left:826.5px;top:636.28px;width:10px;height:10px;"><svg style="display:block" width="10" height="10" viewBox="0 0 10 10"><path d="M0.45 5.25 L1.55 4.25 L3.45 6.05 L7.7 -0.1 L8.85 0.65 L4.15 8.1 L3.05 8.2 Z" fill="#2a8664"/></svg></div>
<div class="t" style="left:909.5px;top:632.61px;font-size:11.75px;line-height:16px;color:#474747;font-weight:normal;letter-spacing:0.2px;">Jul 30, 2021 11:50 AM</div>
<div class="t" style="left:1094px;top:632.61px;font-size:11.75px;line-height:16px;color:#474747;font-weight:normal;">3 days ago</div>
<div class="t" style="left:1243.5px;top:632.61px;font-size:11.75px;line-height:16px;color:#474747;font-weight:normal;">2 days ago</div>
<div class="a" style="left:21px;top:673.40px;width:223px;height:1px;background:#ededed;"></div>
<div class="a" style="left:817px;top:673.40px;width:81px;height:1px;background:#ededed;"></div>
<div class="a" style="left:899px;top:673.40px;width:184px;height:1px;background:#ededed;"></div>
<div class="a" style="left:1084px;top:673.40px;width:148px;height:1px;background:#ededed;"></div>
<div class="a" style="left:1233px;top:673.40px;width:150px;height:1px;background:#ededed;"></div>
<div class="a" style="left:383px;top:673.40px;width:15px;height:1px;background:#f1f1f1;"></div>
<div class="a" style="left:532px;top:673.40px;width:15px;height:1px;background:#f1f1f1;"></div>
<div class="a" style="left:806px;top:673.40px;width:10px;height:1px;background:#f3f3f3;"></div>
<div class="t" style="left:31.5px;top:654.73px;font-size:11.75px;line-height:16px;color:#474747;font-weight:normal;letter-spacing:-0.02px;">All Users, Pcc Agents</div>
<div class="a" style="left:826.5px;top:658.40px;width:10px;height:10px;"><svg style="display:block" width="10" height="10" viewBox="0 0 10 10"><path d="M0.45 5.25 L1.55 4.25 L3.45 6.05 L7.7 -0.1 L8.85 0.65 L4.15 8.1 L3.05 8.2 Z" fill="#2a8664"/></svg></div>
<div class="t" style="left:909.5px;top:654.73px;font-size:11.75px;line-height:16px;color:#474747;font-weight:normal;letter-spacing:0.2px;">Jul 30, 2021 10:53 AM</div>
<div class="t" style="left:1094px;top:654.73px;font-size:11.75px;line-height:16px;color:#474747;font-weight:normal;">3 days ago</div>
<div class="t" style="left:1243.5px;top:654.73px;font-size:11.75px;line-height:16px;color:#474747;font-weight:normal;">2 days ago</div>
<div class="a" style="left:21px;top:695.52px;width:223px;height:1px;background:#ededed;"></div>
<div class="a" style="left:817px;top:695.52px;width:81px;height:1px;background:#ededed;"></div>
<div class="a" style="left:899px;top:695.52px;width:184px;height:1px;background:#ededed;"></div>
<div class="a" style="left:1084px;top:695.52px;width:148px;height:1px;background:#ededed;"></div>
<div class="a" style="left:1233px;top:695.52px;width:150px;height:1px;background:#ededed;"></div>
<div class="a" style="left:383px;top:695.52px;width:15px;height:1px;background:#f1f1f1;"></div>
<div class="a" style="left:532px;top:695.52px;width:15px;height:1px;background:#f1f1f1;"></div>
<div class="a" style="left:806px;top:695.52px;width:10px;height:1px;background:#f3f3f3;"></div>
<div class="t" style="left:31.5px;top:676.85px;font-size:11.75px;line-height:16px;color:#474747;font-weight:normal;letter-spacing:-0.02px;">All Users, Pcc Agents</div>
<div class="a" style="left:826.5px;top:680.52px;width:10px;height:10px;"><svg style="display:block" width="10" height="10" viewBox="0 0 10 10"><path d="M0.45 5.25 L1.55 4.25 L3.45 6.05 L7.7 -0.1 L8.85 0.65 L4.15 8.1 L3.05 8.2 Z" fill="#2a8664"/></svg></div>
<div class="t" style="left:909.5px;top:676.85px;font-size:11.75px;line-height:16px;color:#474747;font-weight:normal;letter-spacing:0.2px;">Jul 29, 2021 5:30 PM</div>
<div class="t" style="left:1094px;top:676.85px;font-size:11.75px;line-height:16px;color:#474747;font-weight:normal;">4 days ago</div>
<div class="t" style="left:1243.5px;top:676.85px;font-size:11.75px;line-height:16px;color:#474747;font-weight:normal;">3 days ago</div>
<div class="a" style="left:21px;top:717.64px;width:223px;height:1px;background:#ededed;"></div>
<div class="a" style="left:817px;top:717.64px;width:81px;height:1px;background:#ededed;"></div>
<div class="a" style="left:899px;top:717.64px;width:184px;height:1px;background:#ededed;"></div>
<div class="a" style="left:1084px;top:717.64px;width:148px;height:1px;background:#ededed;"></div>
<div class="a" style="left:1233px;top:717.64px;width:150px;height:1px;background:#ededed;"></div>
<div class="a" style="left:383px;top:717.64px;width:15px;height:1px;background:#f1f1f1;"></div>
<div class="a" style="left:532px;top:717.64px;width:15px;height:1px;background:#f1f1f1;"></div>
<div class="a" style="left:806px;top:717.64px;width:10px;height:1px;background:#f3f3f3;"></div>
<div class="t" style="left:31.5px;top:698.97px;font-size:11.75px;line-height:16px;color:#474747;font-weight:normal;letter-spacing:-0.02px;">All Users, Pcc Agents</div>
<div class="a" style="left:826.5px;top:702.64px;width:10px;height:10px;"><svg style="display:block" width="10" height="10" viewBox="0 0 10 10"><path d="M0.45 5.25 L1.55 4.25 L3.45 6.05 L7.7 -0.1 L8.85 0.65 L4.15 8.1 L3.05 8.2 Z" fill="#2a8664"/></svg></div>
<div class="t" style="left:909.5px;top:698.97px;font-size:11.75px;line-height:16px;color:#474747;font-weight:normal;letter-spacing:0.2px;">Jul 29, 2021 2:00 PM</div>
<div class="t" style="left:1094px;top:698.97px;font-size:11.75px;line-height:16px;color:#474747;font-weight:normal;">4 days ago</div>
<div class="t" style="left:1243.5px;top:698.97px;font-size:11.75px;line-height:16px;color:#474747;font-weight:normal;">3 days ago</div>
<div class="a" style="left:21px;top:739.76px;width:223px;height:1px;background:#ededed;"></div>
<div class="a" style="left:817px;top:739.76px;width:81px;height:1px;background:#ededed;"></div>
<div class="a" style="left:899px;top:739.76px;width:184px;height:1px;background:#ededed;"></div>
<div class="a" style="left:1084px;top:739.76px;width:148px;height:1px;background:#ededed;"></div>
<div class="a" style="left:1233px;top:739.76px;width:150px;height:1px;background:#ededed;"></div>
<div class="a" style="left:383px;top:739.76px;width:15px;height:1px;background:#f1f1f1;"></div>
<div class="a" style="left:532px;top:739.76px;width:15px;height:1px;background:#f1f1f1;"></div>
<div class="a" style="left:806px;top:739.76px;width:10px;height:1px;background:#f3f3f3;"></div>
<div class="t" style="left:31.5px;top:721.09px;font-size:11.75px;line-height:16px;color:#474747;font-weight:normal;letter-spacing:-0.02px;">All Users, Pcc Agents</div>
<div class="a" style="left:826.5px;top:724.76px;width:10px;height:10px;"><svg style="display:block" width="10" height="10" viewBox="0 0 10 10"><path d="M0.45 5.25 L1.55 4.25 L3.45 6.05 L7.7 -0.1 L8.85 0.65 L4.15 8.1 L3.05 8.2 Z" fill="#2a8664"/></svg></div>
<div class="t" style="left:909.5px;top:721.09px;font-size:11.75px;line-height:16px;color:#474747;font-weight:normal;letter-spacing:0.2px;">Jul 29, 2021 1:49 PM</div>
<div class="t" style="left:1094px;top:721.09px;font-size:11.75px;line-height:16px;color:#474747;font-weight:normal;">4 days ago</div>
<div class="t" style="left:1243.5px;top:721.09px;font-size:11.75px;line-height:16px;color:#474747;font-weight:normal;">3 days ago</div>
<div class="a" style="left:21px;top:761.88px;width:223px;height:1px;background:#ededed;"></div>
<div class="a" style="left:817px;top:761.88px;width:81px;height:1px;background:#ededed;"></div>
<div class="a" style="left:899px;top:761.88px;width:184px;height:1px;background:#ededed;"></div>
<div class="a" style="left:1084px;top:761.88px;width:148px;height:1px;background:#ededed;"></div>
<div class="a" style="left:1233px;top:761.88px;width:150px;height:1px;background:#ededed;"></div>
<div class="a" style="left:383px;top:761.88px;width:15px;height:1px;background:#f1f1f1;"></div>
<div class="a" style="left:532px;top:761.88px;width:15px;height:1px;background:#f1f1f1;"></div>
<div class="a" style="left:806px;top:761.88px;width:10px;height:1px;background:#f3f3f3;"></div>
<div class="t" style="left:31.5px;top:743.21px;font-size:11.75px;line-height:16px;color:#474747;font-weight:normal;letter-spacing:-0.02px;">All Users, Solera</div>
<div class="a" style="left:826.5px;top:746.88px;width:10px;height:10px;"><svg style="display:block" width="10" height="10" viewBox="0 0 10 10"><path d="M0.45 5.25 L1.55 4.25 L3.45 6.05 L7.7 -0.1 L8.85 0.65 L4.15 8.1 L3.05 8.2 Z" fill="#2a8664"/></svg></div>
<div class="t" style="left:909.5px;top:743.21px;font-size:11.75px;line-height:16px;color:#474747;font-weight:normal;letter-spacing:0.2px;">Jul 29, 2021 10:19 AM</div>
<div class="t" style="left:1094px;top:743.21px;font-size:11.75px;line-height:16px;color:#474747;font-weight:normal;">4 days ago</div>
<div class="t" style="left:1243.5px;top:743.21px;font-size:11.75px;line-height:16px;color:#474747;font-weight:normal;">4 days ago</div>
<div class="a" style="left:21px;top:784.00px;width:223px;height:1px;background:#ededed;"></div>
<div class="a" style="left:817px;top:784.00px;width:81px;height:1px;background:#ededed;"></div>
<div class="a" style="left:899px;top:784.00px;width:184px;height:1px;background:#ededed;"></div>
<div class="a" style="left:1084px;top:784.00px;width:148px;height:1px;background:#ededed;"></div>
<div class="a" style="left:1233px;top:784.00px;width:150px;height:1px;background:#ededed;"></div>
<div class="a" style="left:383px;top:784.00px;width:15px;height:1px;background:#f1f1f1;"></div>
<div class="a" style="left:532px;top:784.00px;width:15px;height:1px;background:#f1f1f1;"></div>
<div class="a" style="left:806px;top:784.00px;width:10px;height:1px;background:#f3f3f3;"></div>
<div class="t" style="left:31.5px;top:765.33px;font-size:11.75px;line-height:16px;color:#474747;font-weight:normal;letter-spacing:-0.02px;">All Users, Solera</div>
<div class="a" style="left:826.5px;top:769.00px;width:10px;height:10px;"><svg style="display:block" width="10" height="10" viewBox="0 0 10 10"><path d="M0.45 5.25 L1.55 4.25 L3.45 6.05 L7.7 -0.1 L8.85 0.65 L4.15 8.1 L3.05 8.2 Z" fill="#2a8664"/></svg></div>
<div class="t" style="left:909.5px;top:765.33px;font-size:11.75px;line-height:16px;color:#474747;font-weight:normal;letter-spacing:0.2px;">Jul 28, 2021 3:03 PM</div>
<div class="t" style="left:1094px;top:765.33px;font-size:11.75px;line-height:16px;color:#474747;font-weight:normal;">5 days ago</div>
<div class="t" style="left:1243.5px;top:765.33px;font-size:11.75px;line-height:16px;color:#474747;font-weight:normal;">4 days ago</div>
<div class="a" style="left:21px;top:806.12px;width:223px;height:1px;background:#ededed;"></div>
<div class="a" style="left:817px;top:806.12px;width:81px;height:1px;background:#ededed;"></div>
<div class="a" style="left:899px;top:806.12px;width:184px;height:1px;background:#ededed;"></div>
<div class="a" style="left:1084px;top:806.12px;width:148px;height:1px;background:#ededed;"></div>
<div class="a" style="left:1233px;top:806.12px;width:150px;height:1px;background:#ededed;"></div>
<div class="a" style="left:383px;top:806.12px;width:15px;height:1px;background:#f1f1f1;"></div>
<div class="a" style="left:532px;top:806.12px;width:15px;height:1px;background:#f1f1f1;"></div>
<div class="a" style="left:806px;top:806.12px;width:10px;height:1px;background:#f3f3f3;"></div>
<div class="t" style="left:31.5px;top:787.45px;font-size:11.75px;line-height:16px;color:#474747;font-weight:normal;letter-spacing:-0.02px;">All Users, Pcc Admins</div>
<div class="a" style="left:826.5px;top:791.12px;width:10px;height:10px;"><svg style="display:block" width="10" height="10" viewBox="0 0 10 10"><path d="M0.45 5.25 L1.55 4.25 L3.45 6.05 L7.7 -0.1 L8.85 0.65 L4.15 8.1 L3.05 8.2 Z" fill="#2a8664"/></svg></div>
<div class="t" style="left:909.5px;top:787.45px;font-size:11.75px;line-height:16px;color:#474747;font-weight:normal;letter-spacing:0.2px;">Jul 28, 2021 2:19 PM</div>
<div class="t" style="left:1094px;top:787.45px;font-size:11.75px;line-height:16px;color:#474747;font-weight:normal;">5 days ago</div>
<div class="t" style="left:1243.5px;top:787.45px;font-size:11.75px;line-height:16px;color:#474747;font-weight:normal;">4 days ago</div>
<div class="a" style="left:21px;top:828.24px;width:223px;height:1px;background:#ededed;"></div>
<div class="a" style="left:817px;top:828.24px;width:81px;height:1px;background:#ededed;"></div>
<div class="a" style="left:899px;top:828.24px;width:184px;height:1px;background:#ededed;"></div>
<div class="a" style="left:1084px;top:828.24px;width:148px;height:1px;background:#ededed;"></div>
<div class="a" style="left:1233px;top:828.24px;width:150px;height:1px;background:#ededed;"></div>
<div class="a" style="left:383px;top:828.24px;width:15px;height:1px;background:#f1f1f1;"></div>
<div class="a" style="left:532px;top:828.24px;width:15px;height:1px;background:#f1f1f1;"></div>
<div class="a" style="left:806px;top:828.24px;width:10px;height:1px;background:#f3f3f3;"></div>
<div class="t" style="left:31.5px;top:809.57px;font-size:11.75px;line-height:16px;color:#474747;font-weight:normal;letter-spacing:-0.02px;">All Users, Pcc Admins</div>
<div class="a" style="left:826.5px;top:813.24px;width:10px;height:10px;"><svg style="display:block" width="10" height="10" viewBox="0 0 10 10"><path d="M0.45 5.25 L1.55 4.25 L3.45 6.05 L7.7 -0.1 L8.85 0.65 L4.15 8.1 L3.05 8.2 Z" fill="#2a8664"/></svg></div>
<div class="t" style="left:909.5px;top:809.57px;font-size:11.75px;line-height:16px;color:#474747;font-weight:normal;letter-spacing:0.2px;">Jul 28, 2021 12:47 PM</div>
<div class="t" style="left:1094px;top:809.57px;font-size:11.75px;line-height:16px;color:#474747;font-weight:normal;">5 days ago</div>
<div class="t" style="left:1243.5px;top:809.57px;font-size:11.75px;line-height:16px;color:#474747;font-weight:normal;">4 days ago</div>
<div class="a" style="left:21px;top:850.36px;width:223px;height:1px;background:#ededed;"></div>
<div class="a" style="left:817px;top:850.36px;width:81px;height:1px;background:#ededed;"></div>
<div class="a" style="left:899px;top:850.36px;width:184px;height:1px;background:#ededed;"></div>
<div class="a" style="left:1084px;top:850.36px;width:148px;height:1px;background:#ededed;"></div>
<div class="a" style="left:1233px;top:850.36px;width:150px;height:1px;background:#ededed;"></div>
<div class="a" style="left:383px;top:850.36px;width:15px;height:1px;background:#f1f1f1;"></div>
<div class="a" style="left:532px;top:850.36px;width:15px;height:1px;background:#f1f1f1;"></div>
<div class="a" style="left:806px;top:850.36px;width:10px;height:1px;background:#f3f3f3;"></div>
<div class="t" style="left:31.5px;top:831.69px;font-size:11.75px;line-height:16px;color:#474747;font-weight:normal;letter-spacing:-0.02px;">All Users, Solera</div>
<div class="a" style="left:826.5px;top:835.36px;width:10px;height:10px;"><svg style="display:block" width="10" height="10" viewBox="0 0 10 10"><path d="M0.45 5.25 L1.55 4.25 L3.45 6.05 L7.7 -0.1 L8.85 0.65 L4.15 8.1 L3.05 8.2 Z" fill="#2a8664"/></svg></div>
<div class="t" style="left:909.5px;top:831.69px;font-size:11.75px;line-height:16px;color:#474747;font-weight:normal;letter-spacing:0.2px;">Jul 28, 2021 11:15 AM</div>
<div class="t" style="left:1094px;top:831.69px;font-size:11.75px;line-height:16px;color:#474747;font-weight:normal;">5 days ago</div>
<div class="t" style="left:1243.5px;top:831.69px;font-size:11.75px;line-height:16px;color:#474747;font-weight:normal;">4 days ago</div>
<div class="a" style="left:21px;top:872.48px;width:223px;height:1px;background:#ededed;"></div>
<div class="a" style="left:817px;top:872.48px;width:81px;height:1px;background:#ededed;"></div>
<div class="a" style="left:899px;top:872.48px;width:184px;height:1px;background:#ededed;"></div>
<div class="a" style="left:1084px;top:872.48px;width:148px;height:1px;background:#ededed;"></div>
<div class="a" style="left:1233px;top:872.48px;width:150px;height:1px;background:#ededed;"></div>
<div class="a" style="left:383px;top:872.48px;width:15px;height:1px;background:#f1f1f1;"></div>
<div class="a" style="left:532px;top:872.48px;width:15px;height:1px;background:#f1f1f1;"></div>
<div class="a" style="left:806px;top:872.48px;width:10px;height:1px;background:#f3f3f3;"></div>
<div class="t" style="left:31.5px;top:853.81px;font-size:11.75px;line-height:16px;color:#474747;font-weight:normal;letter-spacing:-0.02px;">All Users, Pcc Agents</div>
<div class="a" style="left:826.5px;top:857.48px;width:10px;height:10px;"><svg style="display:block" width="10" height="10" viewBox="0 0 10 10"><path d="M0.45 5.25 L1.55 4.25 L3.45 6.05 L7.7 -0.1 L8.85 0.65 L4.15 8.1 L3.05 8.2 Z" fill="#2a8664"/></svg></div>
<div class="t" style="left:909.5px;top:853.81px;font-size:11.75px;line-height:16px;color:#474747;font-weight:normal;letter-spacing:0.2px;">Jul 28, 2021 6:07 AM</div>
<div class="t" style="left:1094px;top:853.81px;font-size:11.75px;line-height:16px;color:#474747;font-weight:normal;">5 days ago</div>
<div class="t" style="left:1243.5px;top:853.81px;font-size:11.75px;line-height:16px;color:#474747;font-weight:normal;">5 days ago</div>
<div class="a" style="left:21px;top:872px;width:1361px;height:1px;background:#e6e6e6;"></div>
<div class="t" style="left:32.2px;top:882.04px;font-size:12px;line-height:17px;color:#777;font-weight:normal;">73 results</div>
<div class="a" style="left:655px;top:879px;width:18px;height:21px;background:#fafafa;border:1px solid #f3f3f3;box-sizing:border-box;border-radius:2px;"></div>
<svg class="a" style="left:662px;top:886px" width="6" height="8" viewBox="0 0 6 8"><path d="M4.5 1 L1.5 4 L4.5 7" fill="none" stroke="#d0d0d0" stroke-width="1.4"/></svg>
<div class="a" style="left:679px;top:878px;width:22px;height:22px;background:#fff;border:1px solid #efefef;box-sizing:border-box;border-radius:3px;"></div>
<div class="t" style="left:686px;top:881.94px;font-size:12px;line-height:17px;color:#5a5a5a;font-weight:normal;">1</div>
<div class="t" style="left:704px;top:881.94px;font-size:12px;line-height:17px;color:#5a5a5a;font-weight:normal;">of 3</div>
<svg class="a" style="left:736px;top:886px" width="7" height="8" viewBox="0 0 7 8"><path d="M2 1 L5 4 L2 7" fill="none" stroke="#444" stroke-width="1.6"/></svg>
<svg class="a" style="left:1300px;top:881px" width="14" height="15" viewBox="0 0 14 15"><path d="M6.4 1.5 V9.2" stroke="#4a4a4a" stroke-width="1.5" fill="none"/><path d="M3 6.2 L6.4 9.6 L9.8 6.2" stroke="#4a4a4a" stroke-width="1.5" fill="none"/><path d="M1.2 12.5 H11.9" stroke="#4a4a4a" stroke-width="1.6"/></svg>
<svg class="a" style="left:1326px;top:882px" width="12" height="13" viewBox="0 0 12 13"><path d="M1 1.2 H10.6 L7 5.6 V11.8 L5.2 10.4 V5.6 Z" fill="#4a4a4a"/></svg>
<svg class="a" style="left:1351px;top:882px" width="14" height="14" viewBox="0 0 14 14"><path d="M11.0 4.4 A4.7 4.7 0 1 0 11.3 9.0" fill="none" stroke="#4a4a4a" stroke-width="1.7"/><path d="M8.6 1.6 H12.5 V5.5 Z" fill="#4a4a4a"/></svg>
</body></html>
